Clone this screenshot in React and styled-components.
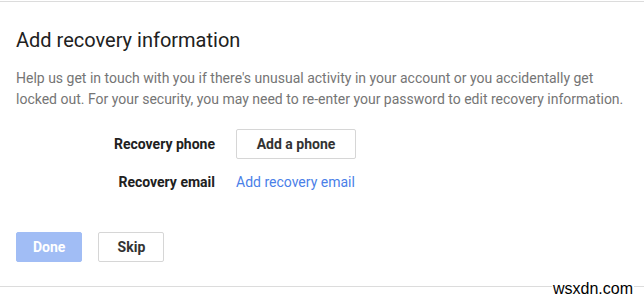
import React from 'react';
import styled, { createGlobalStyle } from 'styled-components';

const Global = createGlobalStyle`
  html, body {
    margin: 0;
    padding: 0;
    background: #fff;
  }
  body {
    font-family: Roboto, "Liberation Sans", Arial, sans-serif;
  }
`;

const Page = styled.div`
  position: relative;
  width: 644px;
  height: 299px;
  overflow: hidden;
  background: #fff;
`;

const Card = styled.section`
  border-top: 1px solid #dcdcdc;
  border-bottom: 1px solid #dcdcdc;
  margin-top: 1px;
  height: 286px;
  box-sizing: border-box;
  padding: 26px 16px 0;
`;

const Title = styled.h1`
  margin: 0;
  font-size: 20px;
  font-weight: 400;
  color: #212121;
  line-height: 24px;
`;

const Intro = styled.p`
  margin: 16px 0 0;
  font-size: 14px;
  line-height: 21px;
  color: #757575;
`;

const Fields = styled.div`
  display: grid;
  grid-template-columns: 199px auto;
  column-gap: 21px;
  row-gap: 9px;
  align-items: center;
  justify-items: start;
  margin-top: 19px;
`;

const Label = styled.div`
  justify-self: end;
  font-size: 14px;
  font-weight: 700;
  color: #212121;
`;

const Button = styled.button`
  font-family: inherit;
  font-size: 14px;
  font-weight: 700;
  height: 30px;
  min-width: ${p => p.$wide ? '120px' : '66px'};
  padding: 0 16px;
  border-radius: 2px;
  cursor: pointer;
  border: 1px solid ${p => p.$primary ? '#a1bdf5' : '#d6d6d6'};
  background: ${p => p.$primary ? '#a1bdf5' : '#fff'};
  color: ${p => p.$primary ? '#fff' : '#333'};
`;

const Link = styled.a`
  font-size: 14px;
  color: #4a80e8;
  text-decoration: none;
  line-height: 28px;
`;

const Actions = styled.div`
  display: flex;
  gap: 16px;
  margin-top: 36px;
`;

const Watermark = styled.span`
  position: absolute;
  right: 10px;
  bottom: 3px;
  font-family: "Liberation Sans", Arial, sans-serif;
  font-size: 16px;
  color: #000;
  background: #fff;
  padding: 0 1px;
  line-height: 15px;
`;

export default function App() {
  return (
    <Page>
      <Global />
      <Card>
        <Title>Add recovery information</Title>
        <Intro>
          Help us get in touch with you if there's unusual activity in your account or you accidentally get
          locked out. For your security, you may need to re-enter your password to edit recovery information.
        </Intro>
        <Fields>
          <Label>Recovery phone</Label>
          <Button $wide>Add a phone</Button>
          <Label>Recovery email</Label>
          <Link href="#">Add recovery email</Link>
        </Fields>
        <Actions>
          <Button $primary>Done</Button>
          <Button>Skip</Button>
        </Actions>
      </Card>
      <Watermark>wsxdn.com</Watermark>
    </Page>
  );
}
